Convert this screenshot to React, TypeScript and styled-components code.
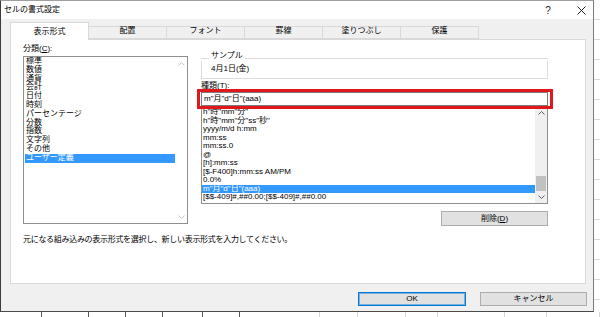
import styled, { createGlobalStyle } from 'styled-components'

const GlobalStyle = createGlobalStyle`
  html, body {
    margin: 0;
    padding: 0;
    background: #fff;
  }
  body {
    font-family: "Liberation Sans", "Noto Sans CJK JP", sans-serif;
    font-size: 8px;
    color: #000;
  }
`

const Screen = styled.div`
  width: 600px;
  height: 317px;
  overflow: hidden;
  display: flex;
  flex-direction: column;
  background: #fff;
`

const TopArea = styled.div`
  display: flex;
  height: 312px;
`

const Dialog = styled.div`
  width: 594px;
  height: 312px;
  box-sizing: border-box;
  display: flex;
  flex-direction: column;
  background: #f0f0f0;
  border-left: 1px solid #3c3c3c;
  border-top: 1px solid #a0a0a0;
  border-right: 1px solid #7a7a7a;
  border-bottom: 1px solid #4a4a4a;
`

const SheetEdge = styled.div`
  width: 6px;
  background: repeating-linear-gradient(to bottom, #fff 0 19px, #d8d8d8 19px 20px);
`

const SheetBottom = styled.div`
  display: flex;
  height: 5px;
`

const SheetCell = styled.div<{ $w: number; $dark?: boolean }>`
  width: ${p => p.$w}px;
  box-sizing: border-box;
  border-right: 1px solid ${p => (p.$dark ? '#5a5a5a' : '#d4d4d4')};
`

const TitleBar = styled.div`
  height: 18px;
  background: #fff;
  display: flex;
  align-items: center;
  padding: 0 5px 0 3px;
`

const Title = styled.div`
  font-size: 8px;
  line-height: 10px;
  flex: 1;
`

const TitleButton = styled.div`
  width: 14px;
  height: 14px;
  display: flex;
  align-items: center;
  justify-content: center;
  font-size: 10px;
  color: #222;
  margin-left: 19px;
`

const TabRow = styled.div`
  display: flex;
  align-items: flex-end;
  height: 17px;
  margin-top: 3px;
  padding-left: 9px;
  position: relative;
  z-index: 1;
`

const Tab = styled.div<{ $active?: boolean }>`
  width: 79px;
  box-sizing: border-box;
  height: ${p => (p.$active ? 18 : 13)}px;
  margin-bottom: ${p => (p.$active ? -1 : 0)}px;
  background: ${p => (p.$active ? '#fff' : '#f0f0f0')};
  border: 1px solid #d9d9d9;
  border-bottom: ${p => (p.$active ? 'none' : '1px solid #d9d9d9')};
  display: flex;
  align-items: flex-end;
  justify-content: center;
  padding-bottom: ${p => (p.$active ? 4 : 3)}px;
  line-height: 9px;
  & + & {
    margin-left: -1px;
  }
`

const Panel = styled.div`
  margin-left: 9px;
  width: 576px;
  height: 245px;
  box-sizing: border-box;
  border: 1px solid #d9d9d9;
  background: #fff;
  padding: 3px 37px 0 12px;
`

const Columns = styled.div`
  display: grid;
  grid-template-columns: 165px 1fr;
  column-gap: 13px;
  align-items: start;
`

const Column = styled.div`
  display: flex;
  flex-direction: column;
`

const Label = styled.div<{ $top?: number }>`
  line-height: 9px;
  margin-top: ${p => p.$top ?? 0}px;
`

const ListBox = styled.div<{ $h: number; $top: number }>`
  height: ${p => p.$h}px;
  margin-top: ${p => p.$top}px;
  box-sizing: border-box;
  border: 1px solid #8f8f8f;
  display: flex;
  overflow: hidden;
  background: #fff;
`

const Rows = styled.div<{ $pad?: number }>`
  flex: 1;
  padding-top: ${p => p.$pad ?? 0}px;
  overflow: hidden;
`

const Row = styled.div<{ $h: number; $selected?: boolean; $indent?: number }>`
  height: ${p => p.$h}px;
  line-height: ${p => p.$h}px;
  margin-left: ${p => p.$indent ?? 0}px;
  padding-left: 1px;
  white-space: nowrap;
  background: ${p => (p.$selected ? '#3399ff' : 'transparent')};
  color: ${p => (p.$selected ? '#fff' : '#000')};
`

const ScrollBar = styled.div<{ $track: string }>`
  width: 12px;
  display: flex;
  flex-direction: column;
  background: ${p => p.$track};
`

const ScrollArrow = styled.div`
  height: 13px;
  display: flex;
  align-items: center;
  justify-content: center;
`

const ScrollTrack = styled.div`
  flex: 1;
  display: flex;
  flex-direction: column;
  align-items: center;
`

const Thumb = styled.div`
  width: 10px;
  height: 15px;
  background: #c1c1c1;
`

const Group = styled.div`
  display: flex;
  flex-direction: column;
  margin-top: 8px;
`

const GroupHead = styled.div`
  display: flex;
  height: 10px;
  line-height: 10px;
  &::before,
  &::after {
    content: '';
    height: 1px;
    margin-top: 7px;
    background: #dcdcdc;
  }
  &::before {
    width: 8px;
  }
  &::after {
    flex: 1;
  }
`

const GroupTitle = styled.span`
  padding: 0 2px;
`

const GroupBody = styled.div`
  height: 18px;
  box-sizing: border-box;
  border: 1px solid #dcdcdc;
  border-top: none;
  padding: 2px 0 0 9px;
  line-height: 12px;
`

const InputWrap = styled.div`
  position: relative;
  margin-top: 2px;
  z-index: 1;
`

const TextInput = styled.div`
  height: 14px;
  box-sizing: border-box;
  border: 1px solid #7a7a7a;
  padding-left: 2px;
  line-height: 12px;
  background: #fff;
`

const RedMark = styled.div`
  position: absolute;
  top: -3px;
  bottom: -3px;
  left: -4px;
  right: -5px;
  border: 3px solid #e3161c;
  pointer-events: none;
`

const ButtonRow = styled.div<{ $top?: number }>`
  display: flex;
  justify-content: flex-end;
  gap: 14px;
  margin-top: ${p => p.$top ?? 0}px;
`

const Button = styled.div<{ $w: number; $h?: number; $focus?: boolean }>`
  width: ${p => p.$w}px;
  height: ${p => p.$h ?? 14}px;
  box-sizing: border-box;
  background: #e1e1e1;
  border: 1px solid ${p => (p.$focus ? '#0078d7' : '#adadad')};
  box-shadow: ${p => (p.$focus ? 'inset 0 0 0 1px rgba(0, 120, 215, 0.45)' : 'none')};
  display: flex;
  align-items: center;
  justify-content: center;
  line-height: 10px;
`

const Hint = styled.div`
  margin-top: 9px;
  line-height: 9px;
  letter-spacing: -0.3px;
`

const Footer = styled.div`
  padding-right: 6px;
`

const Chevron = ({ up, color }: { up?: boolean; color: string }) => (
  <svg width="7" height="4" viewBox="0 0 7 4">
    <polyline
      points={up ? '0.5,3.5 3.5,0.5 6.5,3.5' : '0.5,0.5 3.5,3.5 6.5,0.5'}
      fill="none"
      stroke={color}
      strokeWidth="1"
    />
  </svg>
)

const CloseIcon = () => (
  <svg width="9" height="9" viewBox="0 0 9 9">
    <path d="M0.5 0.5 L8.5 8.5 M8.5 0.5 L0.5 8.5" stroke="#222" strokeWidth="1" />
  </svg>
)

const tabs = ['表示形式', '配置', 'フォント', '罫線', '塗りつぶし', '保護']

const categories = [
  '標準', '数値', '通貨', '会計', '日付', '時刻', 'パーセンテージ',
  '分数', '指数', '文字列', 'その他', 'ユーザー定義',
]

const formats = [
  'h"時"mm"分"',
  'h"時"mm"分"ss"秒"',
  'yyyy/m/d h:mm',
  'mm:ss',
  'mm:ss.0',
  '@',
  '[h]:mm:ss',
  '[$-F400]h:mm:ss AM/PM',
  '0.0%',
  'm"月"d"日"(aaa)',
  '[$$-409]#,##0.00;[$$-409]#,##0.00',
]

const sheetCells: [number, boolean][] = [
  [42, true], [47, true], [37, true], [37, true], [40, true], [37, true],
  [80, false], [38, false], [48, false], [32, false], [67, false], [42, false], [53, false],
]

export default function App() {
  return (
    <Screen>
      <GlobalStyle />
      <TopArea>
        <Dialog>
          <TitleBar>
            <Title>セルの書式設定</Title>
            <TitleButton>?</TitleButton>
            <TitleButton><CloseIcon /></TitleButton>
          </TitleBar>

          <TabRow>
            {tabs.map((t, i) => (
              <Tab key={t} $active={i === 0}>{t}</Tab>
            ))}
          </TabRow>

          <Panel>
            <Columns>
              <Column>
                <Label $top={1}>分類(<u>C</u>):</Label>
                <ListBox $h={168} $top={3}>
                  <Rows>
                    {categories.map((c, i) => (
                      <Row key={c} $h={8.8} $indent={1} $selected={i === categories.length - 1}>{c}</Row>
                    ))}
                  </Rows>
                  <ScrollBar $track="#fff">
                    <ScrollArrow><Chevron up color="#c8c8c8" /></ScrollArrow>
                    <ScrollTrack />
                    <ScrollArrow><Chevron color="#c8c8c8" /></ScrollArrow>
                  </ScrollBar>
                </ListBox>
              </Column>

              <Column>
                <Group>
                  <GroupHead><GroupTitle>サンプル</GroupTitle></GroupHead>
                  <GroupBody>4月1日(金)</GroupBody>
                </Group>
                <Label $top={2}>種類(<u>T</u>):</Label>
                <InputWrap>
                  <TextInput>m"月"d"日"(aaa)</TextInput>
                  <RedMark />
                </InputWrap>
                <ListBox $h={98} $top={0}>
                  <Rows $pad={1}>
                    {formats.map((f, i) => (
                      <Row key={f} $h={8.5} $selected={i === 9}>{f}</Row>
                    ))}
                  </Rows>
                  <ScrollBar $track="#f0f0f0">
                    <ScrollArrow><Chevron up color="#606060" /></ScrollArrow>
                    <ScrollTrack>
                      <div style={{ height: 56 }} />
                      <Thumb />
                    </ScrollTrack>
                    <ScrollArrow><Chevron color="#606060" /></ScrollArrow>
                  </ScrollBar>
                </ListBox>
                <ButtonRow $top={7}>
                  <Button $w={107} $h={15}>削除(<u>D</u>)</Button>
                </ButtonRow>
              </Column>
            </Columns>
            <Hint>元になる組み込みの表示形式を選択し、新しい表示形式を入力してください。</Hint>
          </Panel>

          <Footer>
            <ButtonRow $top={8}>
              <Button $w={108} $focus>OK</Button>
              <Button $w={107}>キャンセル</Button>
            </ButtonRow>
          </Footer>
        </Dialog>
        <SheetEdge />
      </TopArea>
      <SheetBottom>
        {sheetCells.map(([w, dark], i) => (
          <SheetCell key={i} $w={w} $dark={dark} />
        ))}
      </SheetBottom>
    </Screen>
  )
}
